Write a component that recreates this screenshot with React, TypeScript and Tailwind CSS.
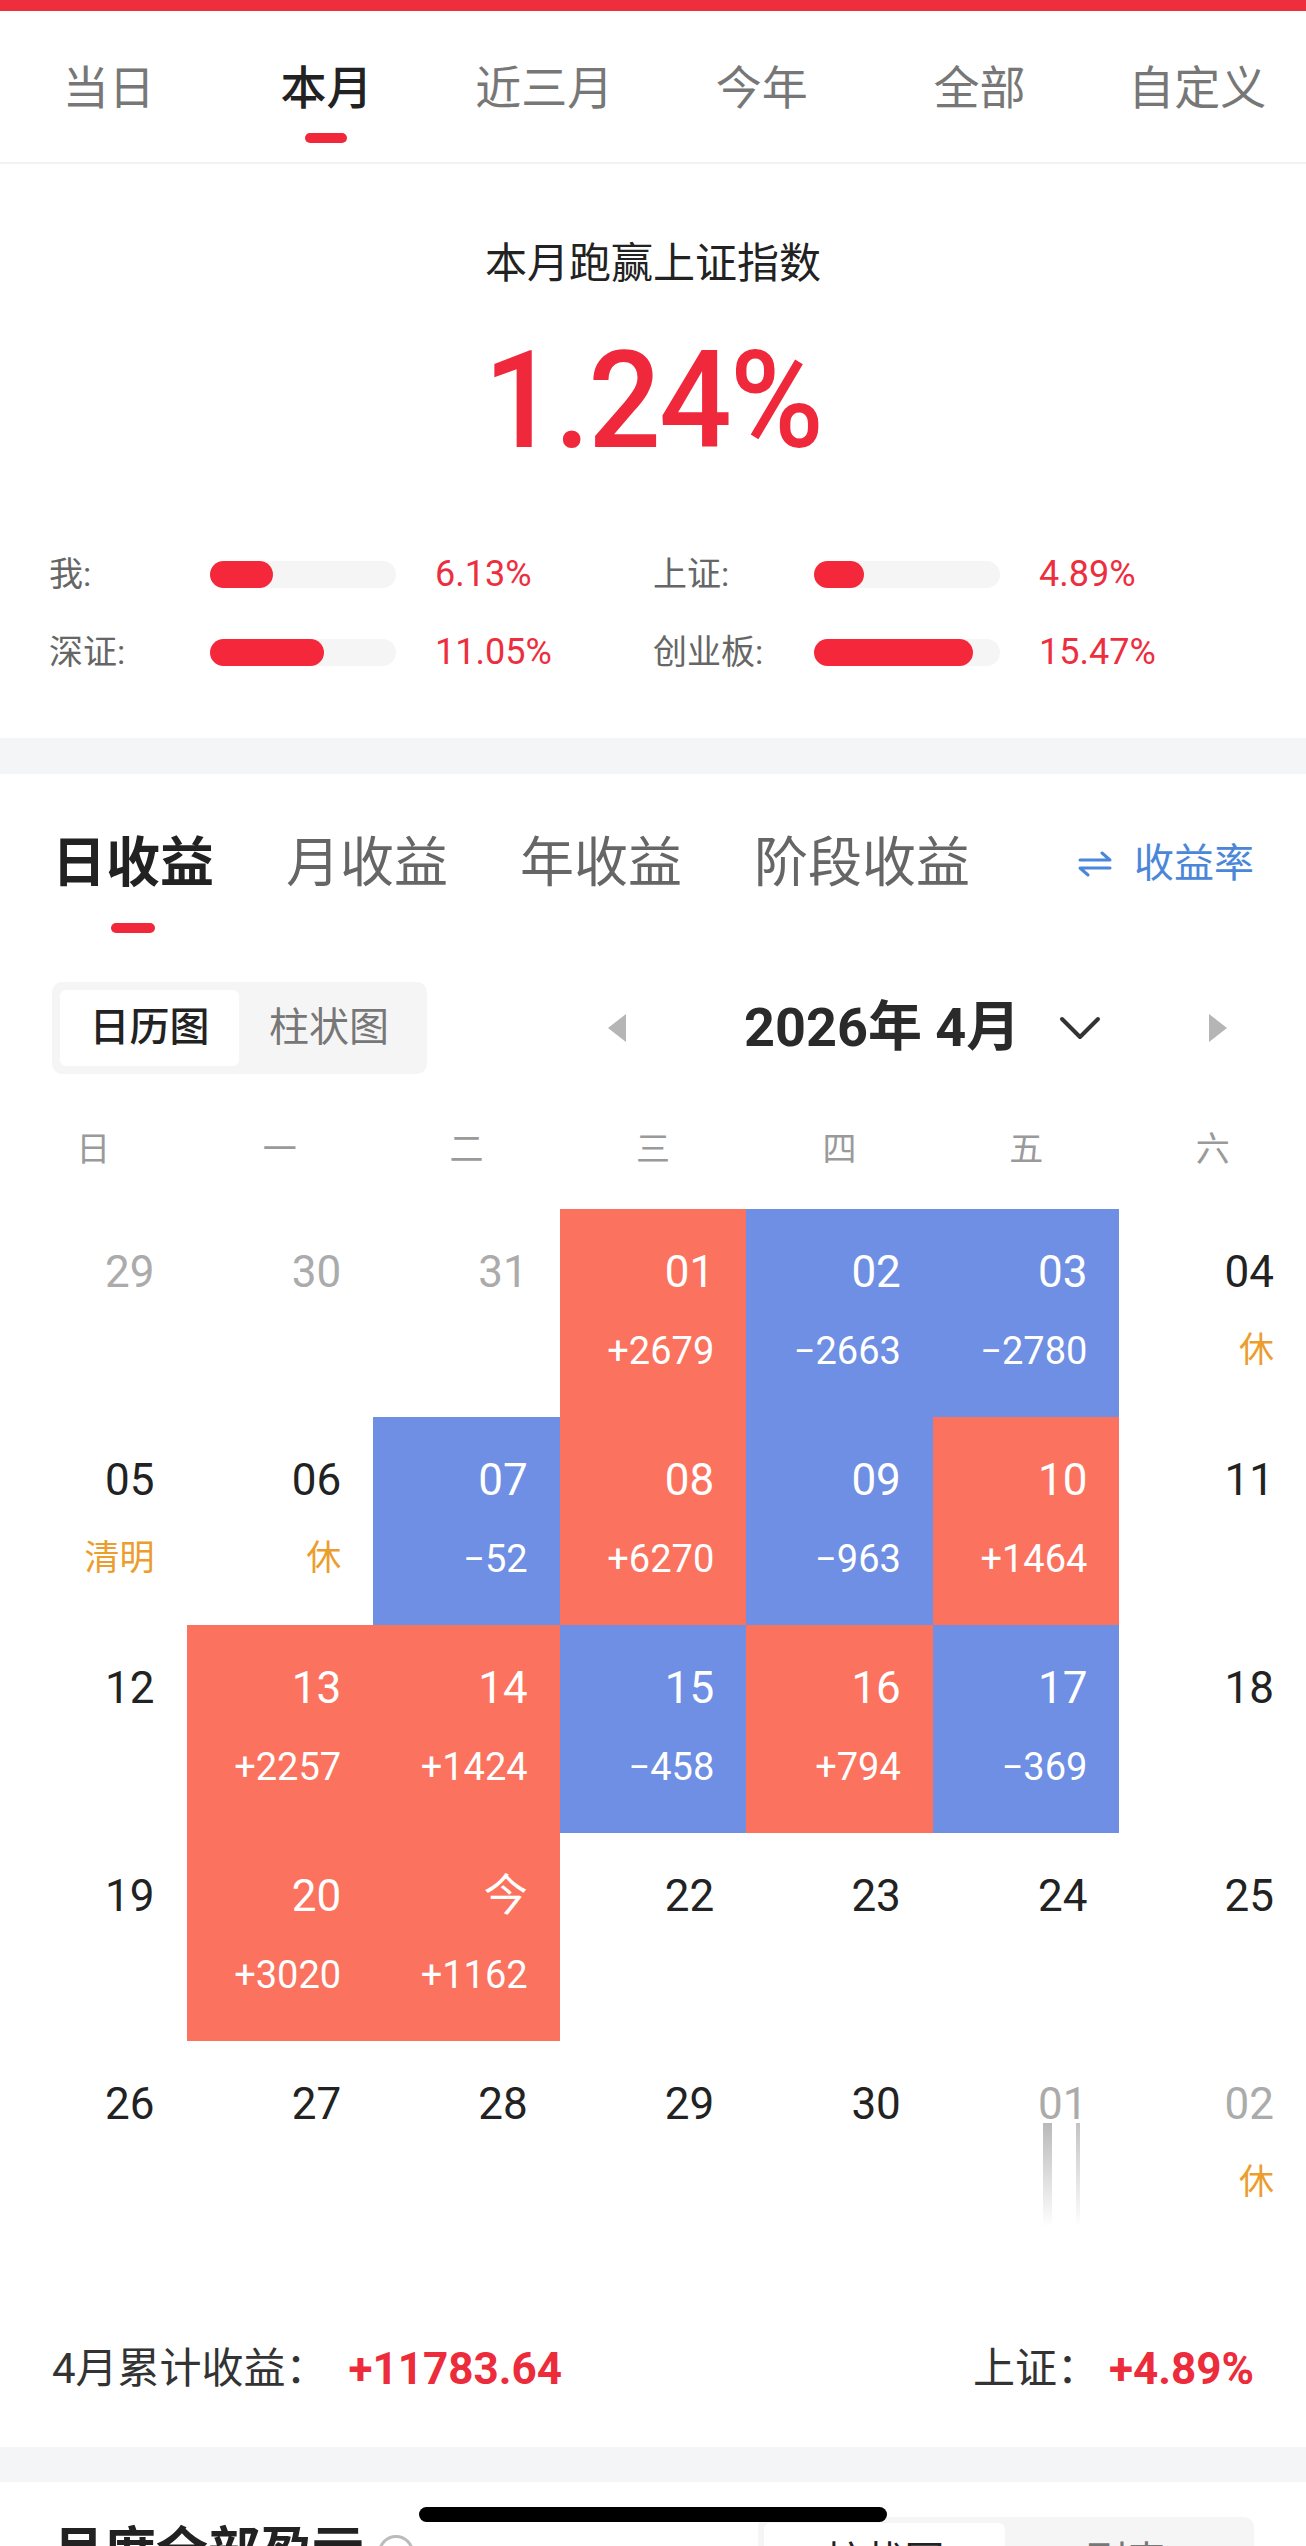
import clsx from 'clsx';

const periods = ['当日', '本月', '近三月', '今年', '全部', '自定义'];
const earnTabs = ['日收益', '月收益', '年收益', '阶段收益'];
const weekdays = ['日', '一', '二', '三', '四', '五', '六'];

const stats = [
  { label: '我:', value: 6.13 },
  { label: '上证:', value: 4.89 },
  { label: '深证:', value: 11.05 },
  { label: '创业板:', value: 15.47 },
];

type Day = {
  d: string;
  amt?: string;
  tone?: 'up' | 'down';
  muted?: boolean;
  tag?: string;
  streak?: boolean;
};

const days: Day[] = [
  { d: '29', muted: true },
  { d: '30', muted: true },
  { d: '31', muted: true },
  { d: '01', amt: '+2679', tone: 'up' },
  { d: '02', amt: '−2663', tone: 'down' },
  { d: '03', amt: '−2780', tone: 'down' },
  { d: '04', tag: '休' },

  { d: '05', tag: '清明' },
  { d: '06', tag: '休' },
  { d: '07', amt: '−52', tone: 'down' },
  { d: '08', amt: '+6270', tone: 'up' },
  { d: '09', amt: '−963', tone: 'down' },
  { d: '10', amt: '+1464', tone: 'up' },
  { d: '11' },

  { d: '12' },
  { d: '13', amt: '+2257', tone: 'up' },
  { d: '14', amt: '+1424', tone: 'up' },
  { d: '15', amt: '−458', tone: 'down' },
  { d: '16', amt: '+794', tone: 'up' },
  { d: '17', amt: '−369', tone: 'down' },
  { d: '18' },

  { d: '19' },
  { d: '20', amt: '+3020', tone: 'up' },
  { d: '今', amt: '+1162', tone: 'up' },
  { d: '22' },
  { d: '23' },
  { d: '24' },
  { d: '25' },

  { d: '26' },
  { d: '27' },
  { d: '28' },
  { d: '29' },
  { d: '30' },
  { d: '01', muted: true, streak: true },
  { d: '02', muted: true, tag: '休' },
];

function DayCell({ day }: { day: Day }) {
  return (
    <div
      className={clsx(
        'flex h-[208px] flex-col items-end pr-[32px] pt-[38px]',
        day.tone === 'up' && 'bg-[#fb735f] text-white',
        day.tone === 'down' && 'bg-[#6e8fe3] text-white',
        !day.tone && (day.muted ? 'text-[#ababab]' : 'text-[#222]')
      )}
    >
      <span className="relative text-[44px] leading-[50px]">
        {day.d}
        {day.streak && (
          <>
            <span className="absolute left-[5px] top-[44px] h-[104px] w-[9px] bg-gradient-to-b from-[#b9b9b9] to-transparent" />
            <span className="absolute left-[38px] top-[44px] h-[104px] w-[4px] bg-gradient-to-b from-[#c4c4c4] to-transparent" />
          </>
        )}
      </span>
      {day.amt && <span className="mt-[31px] text-[38px] leading-[46px]">{day.amt}</span>}
      {day.tag && <span className="mt-[31px] text-[35px] leading-[46px] text-[#eb9d2d]">{day.tag}</span>}
    </div>
  );
}

export default function App() {
  return (
    <div className="relative h-[2546px] w-[1306px] overflow-hidden bg-white font-['Roboto','Noto_Sans_CJK_SC',sans-serif]">
      <div className="h-[11px] bg-[#ee2e3d]" />

      {/* period tabs */}
      <div className="grid grid-cols-6 border-b-2 border-[#f2f2f2] pb-[19px] pt-[50px]">
        {periods.map((p, i) => (
          <div key={p} className="flex flex-col items-center">
            <span
              className={clsx(
                'text-[46px] leading-[54px]',
                i === 1 ? 'font-medium text-[#222]' : 'text-[#777]'
              )}
            >
              {p}
            </span>
            <span
              className={clsx(
                'mt-[18px] h-[10px] w-[42px] rounded-full',
                i === 1 ? 'bg-[#f0283a]' : 'bg-transparent'
              )}
            />
          </div>
        ))}
      </div>

      {/* summary */}
      <div className="flex flex-col items-center pb-[47px] pt-[75px]">
        <div className="text-[42px] leading-[50px] text-[#222]">本月跑赢上证指数</div>
        <div className="mt-[47px] scale-x-[0.94] text-[136px] font-medium leading-[130px] tracking-[-2px] text-[#f0283c]">
          1.24%
        </div>
        <div className="mt-[69px] grid w-full grid-cols-2 px-[49px]">
          {stats.map((s) => (
            <div key={s.label} className="flex h-[78px] items-center">
              <span className="w-[161px] text-[34px] text-[#666]">{s.label}</span>
              <div className="h-[27px] w-[186px] rounded-full bg-[#f5f5f5]">
                <div
                  className="h-full rounded-full bg-[#f5283b]"
                  style={{ width: `${Math.round(s.value * 10.3)}px` }}
                />
              </div>
              <span className="ml-[39px] text-[36px] text-[#ec2f3f]">{s.value.toFixed(2)}%</span>
            </div>
          ))}
        </div>
      </div>

      <div className="h-[36px] bg-[#f4f5f7]" />

      {/* earnings */}
      <div className="pb-[53px]">
        <div className="flex items-start px-[52px] pt-[58px]">
          <div className="flex gap-[72px]">
            {earnTabs.map((t, i) => (
              <div key={t} className="flex flex-col items-center">
                <span
                  className={clsx(
                    'text-[54px] leading-[64px]',
                    i === 0 ? 'font-bold text-[#222]' : 'text-[#666]'
                  )}
                >
                  {t}
                </span>
                <span
                  className={clsx(
                    'mt-[27px] h-[10px] w-[44px] rounded-full',
                    i === 0 ? 'bg-[#f0283a]' : 'bg-transparent'
                  )}
                />
              </div>
            ))}
          </div>
          <div className="ml-auto flex h-[64px] items-center text-[40px] text-[#4b87d9]">
            <svg width="34" height="26" viewBox="0 0 34 26" fill="none" stroke="currentColor" strokeWidth="3" strokeLinecap="round" strokeLinejoin="round">
              <path d="M2 9 H32 L24 2" />
              <path d="M32 17 H2 L10 24" />
            </svg>
            <span className="ml-[22px]">收益率</span>
          </div>
        </div>

        <div className="mt-[49px] flex items-center px-[52px]">
          <div className="flex h-[92px] w-[375px] items-center rounded-[10px] bg-[#f5f5f5] p-[8px]">
            <div className="flex h-full w-[179px] items-center justify-center rounded-[6px] bg-white text-[40px] font-medium text-[#222]">
              日历图
            </div>
            <div className="flex h-full flex-1 items-center justify-center text-[40px] text-[#777]">柱状图</div>
          </div>
          <svg className="ml-[181px]" width="18" height="28" viewBox="0 0 18 28">
            <polygon points="18,0 18,28 0,14" fill="#b5b5b5" />
          </svg>
          <span className="ml-[118px] text-[54px] font-bold leading-[60px] text-[#2a2a2a]">2026年 4月</span>
          <svg className="ml-[39px]" width="42" height="26" viewBox="0 0 42 26" fill="none" stroke="#333" strokeWidth="4" strokeLinecap="round" strokeLinejoin="round">
            <path d="M3 4 L21 22 L39 4" />
          </svg>
          <svg className="ml-[108px]" width="18" height="28" viewBox="0 0 18 28">
            <polygon points="0,0 0,28 18,14" fill="#b5b5b5" />
          </svg>
        </div>

        <div className="mt-[55px] grid grid-cols-7">
          {weekdays.map((w) => (
            <span key={w} className="text-center text-[34px] leading-[40px] text-[#9a9a9a]">
              {w}
            </span>
          ))}
        </div>

        <div className="mt-[40px] grid grid-cols-7">
          {days.map((day, i) => (
            <DayCell key={i} day={day} />
          ))}
        </div>

        <div className="mt-[95px] flex items-center justify-between px-[52px] leading-[50px]">
          <div className="flex items-center">
            <span className="text-[42px] text-[#333]">4月累计收益：</span>
            <span className="ml-[21px] text-[44px] font-bold text-[#ec2b3b]">+11783.64</span>
          </div>
          <div className="flex items-center">
            <span className="text-[42px] text-[#333]">上证：</span>
            <span className="ml-[10px] text-[44px] font-bold text-[#ec2b3b]">+4.89%</span>
          </div>
        </div>
      </div>

      <div className="h-[35px] bg-[#f4f5f7]" />

      {/* next section, cut by the screen edge */}
      <div className="flex items-start px-[52px] pt-[35px]">
        <div className="mt-[6px] flex items-center">
          <span className="text-[52px] font-bold leading-[60px] text-[#222]">月度全部盈亏</span>
          <span className="ml-[14px] h-[36px] w-[36px] rounded-full border-[3px] border-[#bbb]" />
        </div>
        <div className="ml-auto flex h-[90px] w-[496px] rounded-[10px] bg-[#f5f5f5] p-[6px]">
          <div className="flex w-[241px] items-center justify-center rounded-[6px] bg-white text-[40px] text-[#222]">柱状图</div>
          <div className="flex flex-1 items-center justify-center text-[40px] text-[#777]">列表</div>
        </div>
      </div>

      <div className="absolute left-1/2 top-[2507px] h-[15px] w-[468px] -translate-x-1/2 rounded-full bg-black" />
    </div>
  );
}
